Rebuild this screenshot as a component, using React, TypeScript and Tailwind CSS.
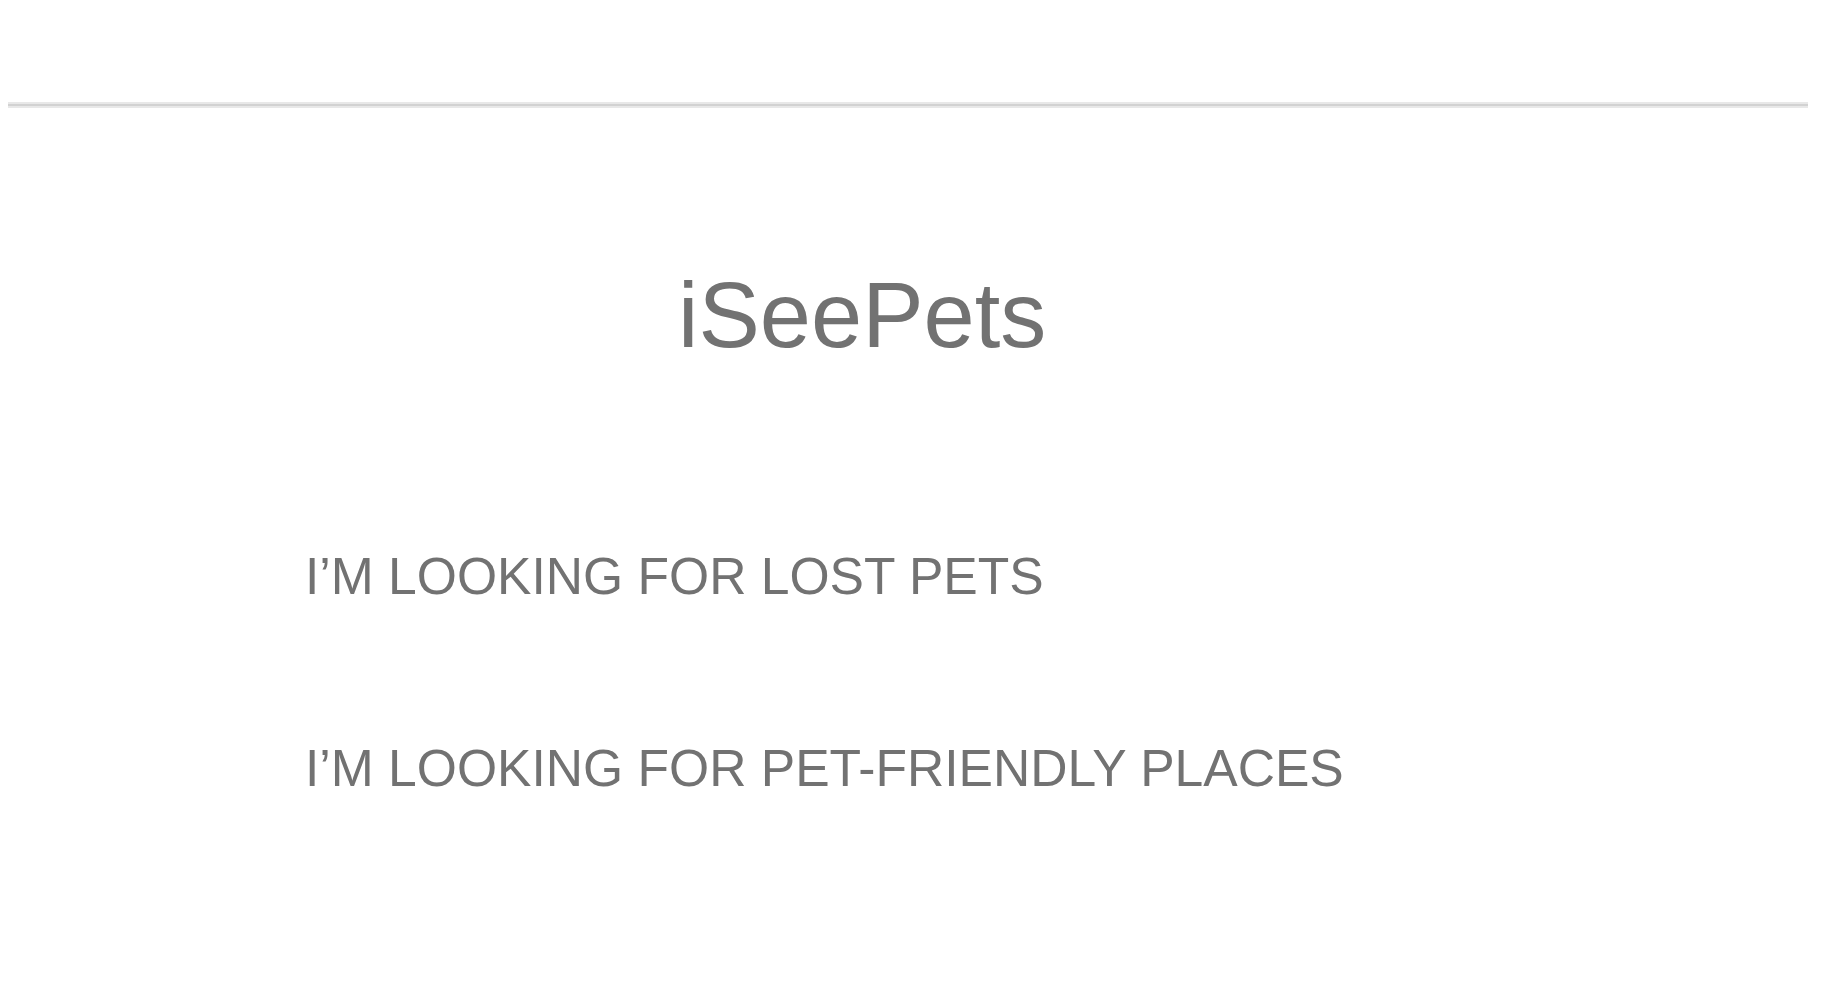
export default function App() {
  return (
    <div
      className="min-h-[984px] bg-white text-[#727272]"
      style={{ fontFamily: '"Liberation Sans", Arial, sans-serif' }}
    >
      {/* top rule */}
      <div className="pt-[102px] pl-[8px] pr-[28px]">
        <div className="flex flex-col">
          <div className="h-[2px] bg-[#e8e8e8]" />
          <div className="h-[2px] bg-[#d2d2d2]" />
          <div className="h-[2px] bg-[#e8e8e8]" />
        </div>
      </div>

      <h1 className="mt-[161px] pl-[678px] text-[92px] leading-[92px] font-normal">
        iSeePets
      </h1>

      <div className="mt-[189px] pl-[305px] flex flex-col gap-[140px]">
        <a className="text-[51.6px] leading-[52px] cursor-pointer">I’M LOOKING FOR LOST PETS</a>
        <a className="text-[51.6px] leading-[52px] cursor-pointer">I’M LOOKING FOR PET-FRIENDLY PLACES</a>
      </div>
    </div>
  );
}
